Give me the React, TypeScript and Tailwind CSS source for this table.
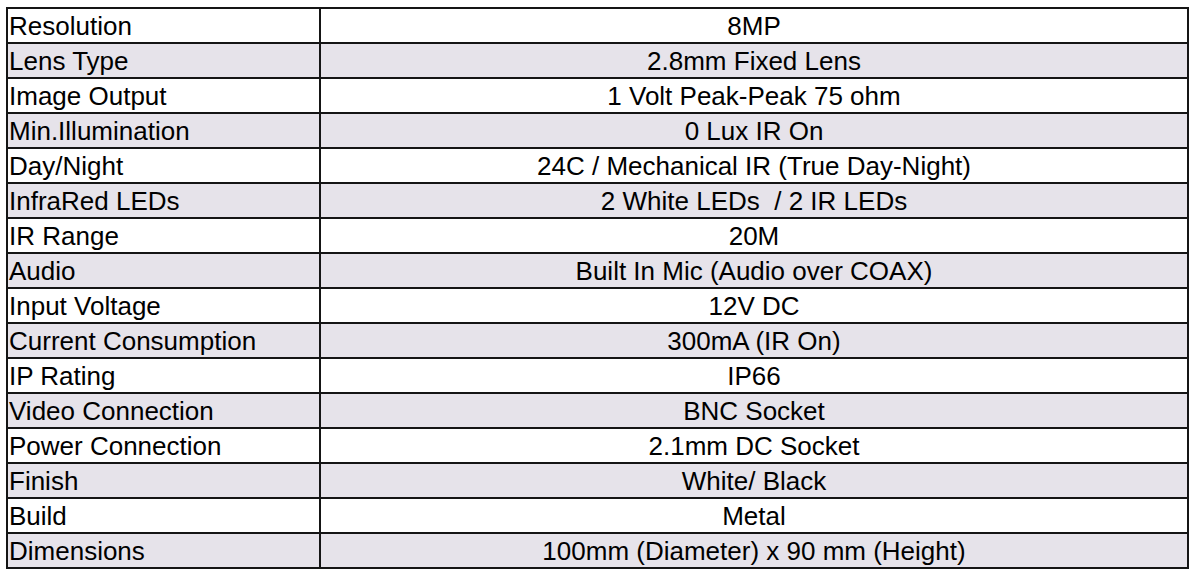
import React from 'react';

const specs: [string, string][] = [
  ['Resolution', '8MP'],
  ['Lens Type', '2.8mm Fixed Lens'],
  ['Image Output', '1 Volt Peak-Peak 75 ohm'],
  ['Min.Illumination', '0 Lux IR On'],
  ['Day/Night', '24C / Mechanical IR (True Day-Night)'],
  ['InfraRed LEDs', '2 White LEDs  / 2 IR LEDs'],
  ['IR Range', '20M'],
  ['Audio', 'Built In Mic (Audio over COAX)'],
  ['Input Voltage', '12V DC'],
  ['Current Consumption', '300mA (IR On)'],
  ['IP Rating', 'IP66'],
  ['Video Connection', 'BNC Socket'],
  ['Power Connection', '2.1mm DC Socket'],
  ['Finish', 'White/ Black'],
  ['Build', 'Metal'],
  ['Dimensions', '100mm (Diameter) x 90 mm (Height)'],
];

export default function App() {
  return (
    <div className="w-[1194px] h-[572px] bg-white pt-[7px] pl-[6px] font-['Liberation_Sans',Arial,sans-serif] text-black">
      <div className="w-[1183px] border-2 border-[#151515]">
        {specs.map(([label, value], i) => (
          <div
            key={label}
            className={`grid grid-cols-[313px_1fr] text-[26px] leading-[33px] ${
              i > 0 ? 'h-[35px] border-t-2 border-[#151515]' : 'h-[33px]'
            } ${i % 2 === 1 ? 'bg-[#e6e3ea]' : 'bg-white'}`}
          >
            <div className="border-r-2 border-[#151515] pl-[1px] pt-[1px] whitespace-pre">{label}</div>
            <div className="text-center pt-[1px] whitespace-pre">{value}</div>
          </div>
        ))}
      </div>
    </div>
  );
}
